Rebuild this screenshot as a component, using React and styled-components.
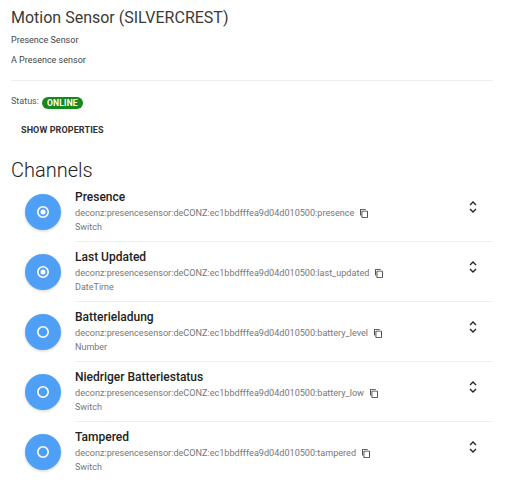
import React from "react";
import styled, { createGlobalStyle } from "styled-components";

const GlobalStyle = createGlobalStyle`
  body {
    margin: 0;
    background: #fff;
    font-family: Roboto, "Liberation Sans", sans-serif;
    color: #333;
  }
`;

// layout

const Page = styled.div`
  padding: 8px 29px 0 11px;
`;

const Title = styled.h1`
  margin: 0;
  font-size: 16px;
  line-height: 20px;
  font-weight: 400;
  color: #3a3a3a;
`;

const SubLine = styled.div`
  font-size: 9px;
  line-height: 20px;
  color: #444;
  margin-top: ${p => p.$top || 0}px;
`;

const Divider = styled.div`
  height: 1px;
  background: #eee;
  margin-top: 10px;
`;

const StatusRow = styled.div`
  margin-top: 9px;
  height: 22px;
  display: flex;
  align-items: center;
  gap: 3px;
  font-size: 9px;
  color: #555;
`;

const Badge = styled.span`
  display: inline-flex;
  align-items: center;
  justify-content: center;
  height: 12px;
  padding: 0 5px;
  border-radius: 6px;
  background: #16891b;
  color: #fff;
  font-size: 8.5px;
  font-weight: 700;
  letter-spacing: 0.2px;
  margin-top: 3px;
`;

const TextButton = styled.button`
  margin-top: 6px;
  height: 24px;
  padding: 0 10px;
  border: none;
  background: transparent;
  font-family: inherit;
  font-size: 9px;
  font-weight: 700;
  color: #333;
  text-transform: uppercase;
  letter-spacing: 0.1px;
  cursor: pointer;
`;

const Heading = styled.h2`
  margin: 16px 0 0 0;
  font-size: 20px;
  line-height: 24px;
  font-weight: 300;
  color: #222;
`;

const List = styled.div`
  display: flex;
  flex-direction: column;
`;

const Row = styled.div`
  display: flex;
  height: 60px;
`;

const AvatarCell = styled.div`
  width: 64px;
  display: flex;
  align-items: center;
  padding-left: 14px;
  box-sizing: border-box;
`;

const Avatar = styled.div`
  width: 36px;
  height: 36px;
  border-radius: 50%;
  background: #4f9ff6;
  box-shadow: 0 1px 3px rgba(0, 0, 0, 0.18);
  display: flex;
  align-items: center;
  justify-content: center;
`;

const Body = styled.div`
  flex: 1;
  display: flex;
  align-items: center;
  border-bottom: 1px solid ${p => (p.$last ? "transparent" : "#eee")};
  padding-right: 15px;
`;

const Texts = styled.div`
  flex: 1;
  display: flex;
  flex-direction: column;
`;

const ChannelName = styled.div`
  font-size: 12px;
  line-height: 16px;
  font-weight: 500;
  color: #222;
  margin-bottom: 1px;
`;

const ChannelUid = styled.div`
  display: flex;
  align-items: center;
  gap: 6px;
  font-size: 9.1px;
  line-height: 14px;
  color: #777;
`;

const ChannelType = styled.div`
  font-size: 9px;
  line-height: 14px;
  color: #777;
`;

const Expand = styled.div`
  width: 10px;
  display: flex;
  align-items: center;
  justify-content: center;
  margin-bottom: 10px;
`;

//

const RadioIcon = ({ on }) => (
  <svg width="14" height="14" viewBox="0 0 14 14">
    <circle cx="7" cy="7" r="5.2" fill="none" stroke="#fff" strokeWidth="1.6" />
    {on && <circle cx="7" cy="7" r="2.5" fill="#fff" />}
  </svg>
);

const CopyIcon = () => (
  <svg width="8" height="9" viewBox="0 0 16 18">
    <path d="M11.5 0H1.7C.8 0 0 .8 0 1.7v11.5h1.7V1.7h9.8V0z" fill="#333" />
    <path d="M14.1 3.4H4.7c-.9 0-1.7.8-1.7 1.7v11.2c0 .9.8 1.7 1.7 1.7h9.4c.9 0 1.7-.8 1.7-1.7V5.1c0-.9-.8-1.7-1.7-1.7zm0 12.9H4.7V5.1h9.4v11.2z" fill="#333" />
  </svg>
);

const UnfoldIcon = () => (
  <svg width="8" height="12" viewBox="0 0 8 12">
    <path d="M1 4l3-3 3 3M1 8l3 3 3-3" fill="none" stroke="#222" strokeWidth="1.4" />
  </svg>
);

const prefix = "deconz:presencesensor:deCONZ:ec1bbdfffea9d04d010500:";

const channels = [
  { name: "Presence", id: "presence", type: "Switch", on: true },
  { name: "Last Updated", id: "last_updated", type: "DateTime", on: true },
  { name: "Batterieladung", id: "battery_level", type: "Number", on: false },
  { name: "Niedriger Batteriestatus", id: "battery_low", type: "Switch", on: false },
  { name: "Tampered", id: "tampered", type: "Switch", on: false },
];

export default function App() {
  return (
    <Page>
      <GlobalStyle />
      <Title>Motion Sensor (SILVERCREST)</Title>
      <SubLine $top={2}>Presence Sensor</SubLine>
      <SubLine>A Presence sensor</SubLine>
      <Divider />
      <StatusRow>
        Status: <Badge>ONLINE</Badge>
      </StatusRow>
      <TextButton>Show Properties</TextButton>
      <Heading>Channels</Heading>
      <List>
        {channels.map((c, i) => (
          <Row key={c.id}>
            <AvatarCell>
              <Avatar>
                <RadioIcon on={c.on} />
              </Avatar>
            </AvatarCell>
            <Body $last={i === channels.length - 1}>
              <Texts>
                <ChannelName>{c.name}</ChannelName>
                <ChannelUid>
                  {prefix + c.id}
                  <CopyIcon />
                </ChannelUid>
                <ChannelType>{c.type}</ChannelType>
              </Texts>
              <Expand>
                <UnfoldIcon />
              </Expand>
            </Body>
          </Row>
        ))}
      </List>
    </Page>
  );
}
